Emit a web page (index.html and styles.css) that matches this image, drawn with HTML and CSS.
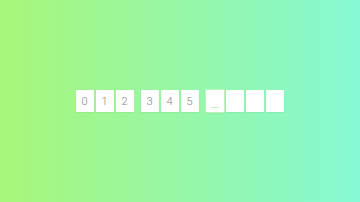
FILE: index.html
```html
<!DOCTYPE html>
<html lang="en">
<head>
    <meta charset="UTF-8">
    <meta name="viewport" content="width=device-width, initial-scale=1.0">
    <title>Code input</title>
    <link rel="stylesheet" href="styles.css">
</head>
<body>
    <div class="code-input">
        <div class="group">
            <div class="digit">0</div>
            <div class="digit">1</div>
            <div class="digit">2</div>
        </div>
        <div class="group">
            <div class="digit">3</div>
            <div class="digit">4</div>
            <div class="digit">5</div>
        </div>
        <div class="group">
            <div class="digit focused"><span class="cursor"></span></div>
            <div class="digit"></div>
            <div class="digit"></div>
            <div class="digit"></div>
        </div>
    </div>
</body>
</html>
```

FILE: styles.css
```css
html, body {
    margin: 0;
    height: 100%;
}

body {
    font-family: Roboto, "Liberation Sans", sans-serif;
    background: linear-gradient(to right, #a8f67a, #86f8d4);
    display: flex;
    align-items: center;
    justify-content: center;
}

.code-input {
    display: flex;
    gap: 7px;
    margin-left: -1px;
}

.group {
    display: flex;
    gap: 2px;
}

.digit {
    width: 18px;
    height: 22px;
    background: #fff;
    border-radius: 1px;
    box-shadow: 0 1px 2px rgba(0,0,0,0.06);
    color: #858585;
    font-size: 11px;
    font-weight: 300;
    display: flex;
    align-items: center;
    justify-content: center;
    position: relative;
}

.focused {
    box-shadow: 0 0 0 1px rgba(200,245,190,0.8), 0 1px 3px rgba(0,0,0,0.08);
}

.cursor {
    position: absolute;
    left: 5px;
    right: 5px;
    bottom: 4px;
    height: 1px;
    background: #cdf2c6;
}
```
